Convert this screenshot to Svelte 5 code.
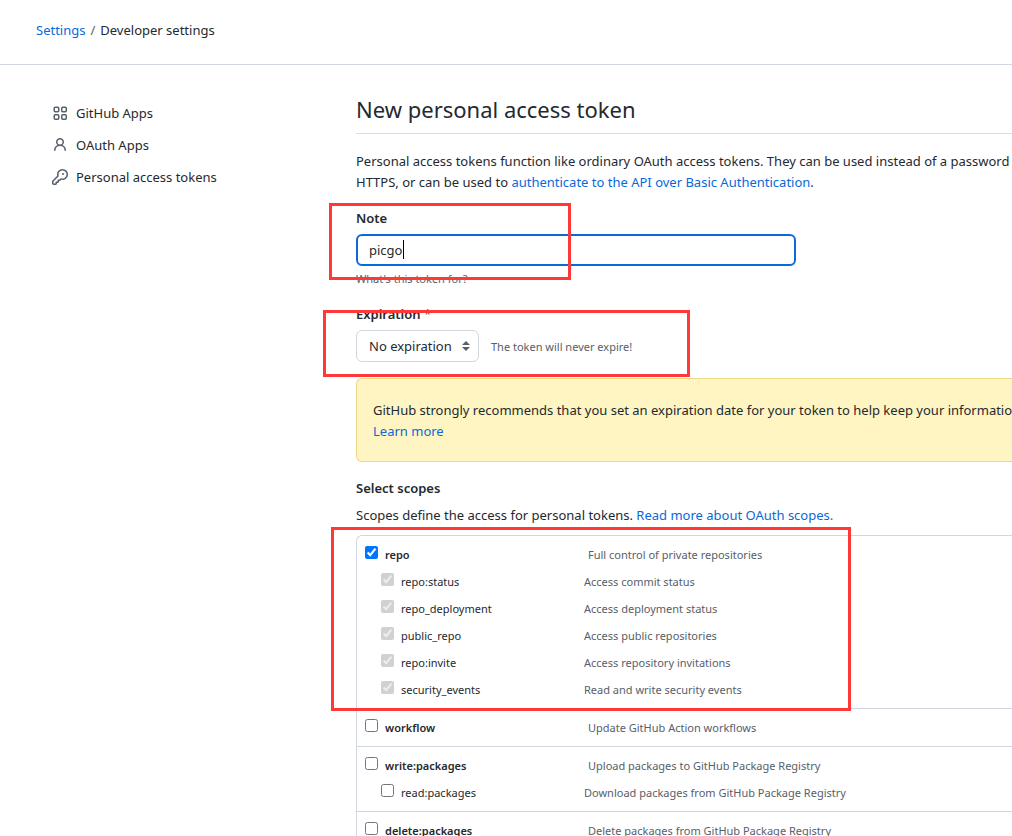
<script lang="ts">
	type Scope = {
		name: string;
		description: string;
		checked?: boolean;
		disabled?: boolean;
	};

	type ScopeGroup = Scope & { children: Scope[] };

	let note = $state('picgo');
	let expiration = $state('none');

	const navItems = [
		{ label: 'GitHub Apps', icon: 'apps' },
		{ label: 'OAuth Apps', icon: 'person' },
		{ label: 'Personal access tokens', icon: 'key' }
	];

	const included = (name: string, description: string): Scope => ({
		name,
		description,
		checked: true,
		disabled: true
	});

	const groups: ScopeGroup[] = [
		{
			name: 'repo',
			description: 'Full control of private repositories',
			checked: true,
			children: [
				included('repo:status', 'Access commit status'),
				included('repo_deployment', 'Access deployment status'),
				included('public_repo', 'Access public repositories'),
				included('repo:invite', 'Access repository invitations'),
				included('security_events', 'Read and write security events')
			]
		},
		{
			name: 'workflow',
			description: 'Update GitHub Action workflows',
			children: []
		},
		{
			name: 'write:packages',
			description: 'Upload packages to GitHub Package Registry',
			children: [
				{ name: 'read:packages', description: 'Download packages from GitHub Package Registry' }
			]
		},
		{
			name: 'delete:packages',
			description: 'Delete packages from GitHub Package Registry',
			children: []
		}
	];
</script>

{#snippet scopeRow(scope: Scope, child: boolean)}
	<div class="scope" class:scope-child={child}>
		<label class="scope-label">
			<input type="checkbox" checked={scope.checked} disabled={scope.disabled} />
			<span class="scope-name">{scope.name}</span>
		</label>
		<span class="scope-description">{scope.description}</span>
	</div>
{/snippet}

<div class="page">
	<header class="header">
		<a href="#settings">Settings</a>
		<span class="slash">/</span>
		<span>Developer settings</span>
	</header>

	<div class="layout">
		<nav class="sidebar" aria-label="Developer settings">
			{#each navItems as item (item.icon)}
				<a class="nav-item" href="#{item.icon}">
					<svg class="icon" viewBox="0 0 16 16" aria-hidden="true">
						{#if item.icon === 'apps'}
							<g fill="none" stroke="currentColor" stroke-width="1.5">
								<rect x="2.25" y="2.25" width="4.5" height="4.5" rx="1" />
								<rect x="9.75" y="2.25" width="4.5" height="4.5" rx="1" />
								<rect x="2.25" y="9.75" width="4.5" height="4.5" rx="1" />
								<rect x="9.75" y="9.75" width="4.5" height="4.5" rx="1" />
							</g>
						{:else if item.icon === 'person'}
							<path
								fill-rule="evenodd"
								d="M10.5 5a2.5 2.5 0 11-5 0 2.5 2.5 0 015 0zm.061 3.073a4 4 0 10-5.123 0 6.004 6.004 0 00-3.431 5.142.75.75 0 001.498.07 4.5 4.5 0 018.99 0 .75.75 0 101.498-.07 6.005 6.005 0 00-3.432-5.142z"
							/>
						{:else}
							<path
								fill-rule="evenodd"
								d="M6.5 5.5a4 4 0 112.731 3.795.75.75 0 00-.768.18L7.44 10.5H6.25a.75.75 0 00-.75.75v1.19l-.06.06H4.25a.75.75 0 00-.75.75v1.19l-.06.06H1.75a.25.25 0 01-.25-.25v-1.69l5.024-5.023a.75.75 0 00.181-.768A3.995 3.995 0 016.5 5.5zm4-5.5a5.5 5.5 0 00-5.348 6.788L.22 11.72a.75.75 0 00-.22.53v2C0 15.216.784 16 1.75 16h2a.75.75 0 00.53-.22l.5-.5a.75.75 0 00.22-.53V14h.75a.75.75 0 00.53-.22l.5-.5a.75.75 0 00.22-.53V12h.75a.75.75 0 00.53-.22l.932-.932A5.5 5.5 0 1010.5 0zm.5 6a1 1 0 100-2 1 1 0 000 2z"
							/>
						{/if}
					</svg>
					{item.label}
				</a>
			{/each}
		</nav>

		<main class="main">
			<h1 class="title">New personal access token</h1>

			<p class="intro">
				Personal access tokens function like ordinary OAuth access tokens. They can be used instead of a password<br />
				HTTPS, or can be used to <a href="#auth">authenticate to the API over Basic Authentication</a>.
			</p>

			<div class="field">
				<label class="field-label" for="note">Note</label>
				<div class="input-wrap">
					<input id="note" class="input" type="text" bind:value={note} />
					<span class="caret"></span>
				</div>
				<p class="hint">What's this token for?</p>
				<div class="mark mark-note"></div>
			</div>

			<div class="field">
				<label class="field-label" for="expiration">Expiration <span class="required">*</span></label>
				<div class="select-row">
					<div class="select-wrap">
						<select id="expiration" class="select" bind:value={expiration}>
							<option value="none">No expiration</option>
						</select>
						<svg class="arrows" viewBox="0 0 8 10" aria-hidden="true">
							<path d="M4 0l4 4H0zM4 10L0 6h8z" />
						</svg>
					</div>
					<span class="hint-inline">The token will never expire!</span>
				</div>
				<div class="mark mark-expiration"></div>
			</div>

			<div class="warning">
				GitHub strongly recommends that you set an expiration date for your token to help keep your information<br />
				<a href="#learn">Learn more</a>
			</div>

			<h2 class="subtitle">Select scopes</h2>
			<p class="scopes-intro">
				Scopes define the access for personal tokens. <a href="#scopes">Read more about OAuth scopes.</a>
			</p>

			<div class="scopes">
				{#each groups as group (group.name)}
					<div class="scope-group">
						{@render scopeRow(group, false)}
						{#each group.children as child (child.name)}
							{@render scopeRow(child, true)}
						{/each}
					</div>
				{/each}
				<div class="mark mark-scopes"></div>
			</div>
		</main>
	</div>
</div>

<style>
	:global(body) {
		background: #fff;
	}

	.page {
		height: 100vh;
		overflow: hidden;
		color: #24292f;
		font-family: 'Noto Sans', 'Open Sans', sans-serif;
		font-size: 13px;
		line-height: 21px;
		white-space: nowrap;
	}

	.page * {
		box-sizing: border-box;
	}

	a {
		color: #0969da;
		text-decoration: none;
	}

	h1,
	h2,
	p {
		margin: 0;
	}

	.header {
		display: flex;
		gap: 5px;
		padding: 20px 36px 23px;
		border-bottom: 1px solid #d0d7de;
	}

	.slash {
		color: #57606a;
	}

	.layout {
		display: flex;
		padding-top: 24px;
	}

	/* Sidebar */
	.sidebar {
		flex: 0 0 356px;
		padding: 8px 0 0 52px;
	}

	.nav-item {
		display: flex;
		align-items: center;
		gap: 8px;
		height: 32px;
		color: #24292f;
	}

	.icon {
		width: 16px;
		height: 16px;
		fill: #57606a;
		color: #57606a;
	}

	/* Main column */
	.main {
		flex: 1;
		min-width: 0;
	}

	.title {
		padding: 2px 0 6px;
		border-bottom: 1px solid #d8dee4;
		font-size: 22px;
		font-weight: 400;
		line-height: 36px;
	}

	.intro {
		margin: 17px 0 15px;
	}

	.field {
		position: relative;
		margin-bottom: 16px;
	}

	.field-label {
		display: block;
		margin-bottom: 5px;
		font-weight: 600;
	}

	.required {
		color: #57606a;
		font-weight: 400;
	}

	.input-wrap {
		position: relative;
		max-width: 440px;
	}

	.input {
		display: block;
		width: 100%;
		height: 32px;
		padding: 0 11px;
		border: 2px solid #0969da;
		border-radius: 6px;
		outline: none;
		background: #fff;
		color: #24292f;
		font: inherit;
		caret-color: transparent;
	}

	.caret {
		position: absolute;
		top: 6px;
		left: 47px;
		width: 1px;
		height: 19px;
		background: #000;
	}

	.hint {
		margin-top: 4px;
		color: #57606a;
		font-size: 11px;
		line-height: 18px;
	}

	.select-row {
		display: flex;
		align-items: center;
		gap: 12px;
	}

	.select-wrap {
		position: relative;
	}

	.select {
		display: block;
		width: 123px;
		height: 32px;
		padding: 0 24px 0 12px;
		border: 1px solid #d0d7de;
		border-radius: 6px;
		appearance: none;
		background: #fff;
		color: #24292f;
		font: inherit;
	}

	.arrows {
		position: absolute;
		top: 11px;
		right: 9px;
		width: 8px;
		height: 10px;
		fill: #57606a;
		pointer-events: none;
	}

	.hint-inline {
		color: #57606a;
		font-size: 11px;
	}

	.warning {
		padding: 21px 16px 19px;
		border: 1px solid #eed888;
		border-right: 0;
		border-radius: 6px 0 0 6px;
		background: #fff5c2;
	}

	/* Scopes */
	.subtitle {
		margin: 16px 0 6px;
		font-size: 13px;
		font-weight: 600;
		line-height: 21px;
	}

	.scopes {
		position: relative;
		margin-top: 9px;
		border-left: 1px solid #d0d7de;
		border-radius: 6px 0 0 0;
		border-top: 1px solid #d0d7de;
		font-size: 11px;
		line-height: 27px;
	}

	.scope-group {
		padding: 5px 0 5px 8px;
	}

	.scope-group + .scope-group {
		border-top: 1px solid #d0d7de;
	}

	.scope {
		display: flex;
	}

	.scope-label {
		display: flex;
		flex: 0 0 223px;
		gap: 7px;
		font-weight: 600;
	}

	.scope-label input {
		width: 13px;
		height: 13px;
		margin: 5px 0 0;
	}

	.scope-child .scope-label {
		flex-basis: 219px;
		padding-left: 16px;
		font-weight: 400;
	}

	.scope-description {
		color: #57606a;
	}

	/* Red outlines drawn over the form */
	.mark {
		position: absolute;
		border: 3px solid #ff3838;
		pointer-events: none;
	}

	.mark-note {
		top: -5px;
		left: -27px;
		width: 242px;
		height: 77px;
	}

	.mark-expiration {
		top: 6px;
		left: -33px;
		width: 367px;
		height: 67px;
	}

	.mark-scopes {
		top: -9px;
		left: -26px;
		width: 520px;
		height: 184px;
	}
</style>
